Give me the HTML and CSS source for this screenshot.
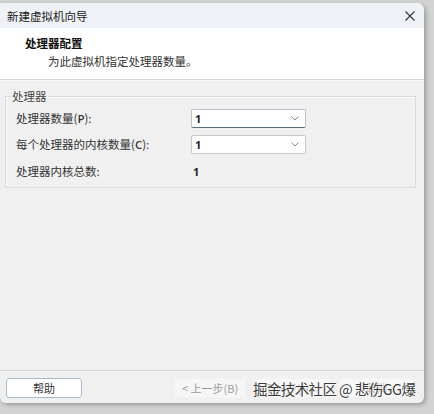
FILE: index.html
```html
<!DOCTYPE html>
<html lang="zh-CN">
<head>
<meta charset="utf-8">
<link rel="stylesheet" href="styles.css">
</head>
<body>
<div class="desktop">
  <div class="window">
    <div class="titlebar">
      <span class="title">新建虚拟机向导</span>
      <svg class="close" width="10" height="10" viewBox="0 0 10 10"><path d="M0.5 0.5L9.5 9.5M9.5 0.5L0.5 9.5" stroke="#333" stroke-width="1.1" fill="none"/></svg>
    </div>
    <div class="header">
      <div class="h-title">处理器配置</div>
      <div class="h-sub">为此虚拟机指定处理器数量。</div>
    </div>
    <div class="body">
      <fieldset class="group">
        <legend>处理器</legend>
        <div class="row">
          <span class="label">处理器数量(<b>P</b>):</span>
          <div class="select focus"><span>1</span><svg width="8" height="5" viewBox="0 0 8 5"><path d="M0.5 0.5L4 4L7.5 0.5" stroke="#888" fill="none"/></svg></div>
        </div>
        <div class="row">
          <span class="label">每个处理器的内核数量(<b>C</b>):</span>
          <div class="select"><span>1</span><svg width="8" height="5" viewBox="0 0 8 5"><path d="M0.5 0.5L4 4L7.5 0.5" stroke="#888" fill="none"/></svg></div>
        </div>
        <div class="row">
          <span class="label">处理器内核总数:</span>
          <span class="value">1</span>
        </div>
      </fieldset>
    </div>
    <div class="footer">
      <button class="btn help">帮助</button>
      <div class="nav">
        <button class="btn disabled">&lt; 上一步(B)</button>
        <button class="btn faint">下一步(N) &gt;</button>
        <button class="btn faint">取消</button>
      </div>
    </div>
    <div class="watermark">掘金技术社区 @ 悲伤GG爆</div>
  </div>
</div>
</body>
</html>
```

FILE: styles.css
```css
html, body {
  margin: 0;
  padding: 0;
}
body {
  width: 434px;
  height: 414px;
  overflow: hidden;
  font-family: "Noto Sans CJK SC", "Noto Sans", sans-serif;
  font-size: 11.5px;
  color: #222;
}
.desktop {
  height: 414px;
  background: #d2d2d2;
  padding-top: 3px;
  box-sizing: border-box;
}
.window {
  position: relative;
  width: 424px;
  height: 400px;
  background: #f0f0f0;
  border-top-right-radius: 7px;
  border-bottom-right-radius: 6px;
  border-bottom-left-radius: 6px;
  box-shadow: 2px 2px 4px rgba(0,0,0,0.25);
  display: flex;
  flex-direction: column;
  overflow: hidden;
}
.titlebar {
  height: 25px;
  background: #eef2f6;
  display: flex;
  align-items: center;
  justify-content: space-between;
  padding: 0 9px 0 7px;
  flex-shrink: 0;
}
.title {
  font-size: 11.5px;
  color: #1a1a1a;
}
.close {
  margin-top: 1px;
}
.header {
  background: #fff;
  height: 52px;
  box-sizing: border-box;
  padding: 7px 0 0 25px;
  border-bottom: 1px solid #d6d6d6;
  flex-shrink: 0;
}
.h-title {
  font-weight: bold;
  font-size: 11.5px;
  line-height: 17px;
  color: #111;
}
.h-sub {
  padding-left: 23px;
  line-height: 18px;
  color: #333;
}
.body {
  flex: 1;
  padding: 8px 8px 0 5px;
  border-top: 1px solid #fafafa;
}
.group {
  margin: 0;
  padding: 2px 0 4px 10px;
  border: 1px solid #dadada;
  box-shadow: inset 1px 1px 0 #fbfbfb;
  height: 99px;
  box-sizing: border-box;
}
.group legend {
  padding: 0 1px;
  margin-left: -5px;
  color: #444;
  line-height: 14px;
}
.row {
  display: flex;
  align-items: center;
  height: 26px;
}
.row:last-child {
  height: 28px;
}
.label {
  width: 175px;
  color: #333;
  flex-shrink: 0;
}
.label b {
  font-family: "Open Sans", "Noto Sans", sans-serif;
  font-weight: 600;
}
.select {
  width: 115px;
  height: 19px;
  box-sizing: border-box;
  background: #fff;
  border: 1px solid #c8c8c8;
  border-radius: 2px;
  display: flex;
  align-items: center;
  justify-content: space-between;
  padding: 0 6px 0 3px;
  font-weight: bold;
  font-family: "Open Sans", sans-serif;
  font-size: 11px;
}
.select.focus {
  border-color: #b9c3cf;
  border-bottom: 1px solid #5b6d85;
}
.value {
  padding-left: 2px;
  font-weight: bold;
  font-family: "Open Sans", sans-serif;
  font-size: 11px;
}
.footer {
  height: 33px;
  flex-shrink: 0;
  border-top: 1px solid #d4d4d4;
  display: flex;
  align-items: flex-start;
  justify-content: space-between;
  padding: 7px 10px 0 6px;
  box-sizing: border-box;
}
.nav {
  display: flex;
  gap: 9px;
}
.btn {
  height: 20px;
  width: 75px;
  box-sizing: border-box;
  font-family: "Noto Sans CJK SC", "Open Sans", sans-serif;
  font-size: 11px;
  padding: 0;
  border-radius: 3px;
  background: #fdfdfd;
  border: 1px solid #ccd2d8;
  color: #333;
}
.btn.help {
  width: 76px;
  border-color: #a9b9cc;
  background: #fff;
}
.btn.disabled {
  width: 72px;
  background: #f6f6f6;
  border-color: #f3f3f3;
  color: #9a9a9a;
}
.btn.faint {
  background: #f7f7f7;
  border-color: #f2f2f2;
  color: #b0b0b0;
}
.watermark {
  position: absolute;
  left: 253px;
  top: 377px;
  font-size: 14.5px;
  line-height: 18px;
  color: #3a3a3a;
  letter-spacing: -0.6px;
  white-space: nowrap;
  text-shadow: 0 0 2px #fff, 0 0 2px #fff, 0 0 1px #fff;
}
```
